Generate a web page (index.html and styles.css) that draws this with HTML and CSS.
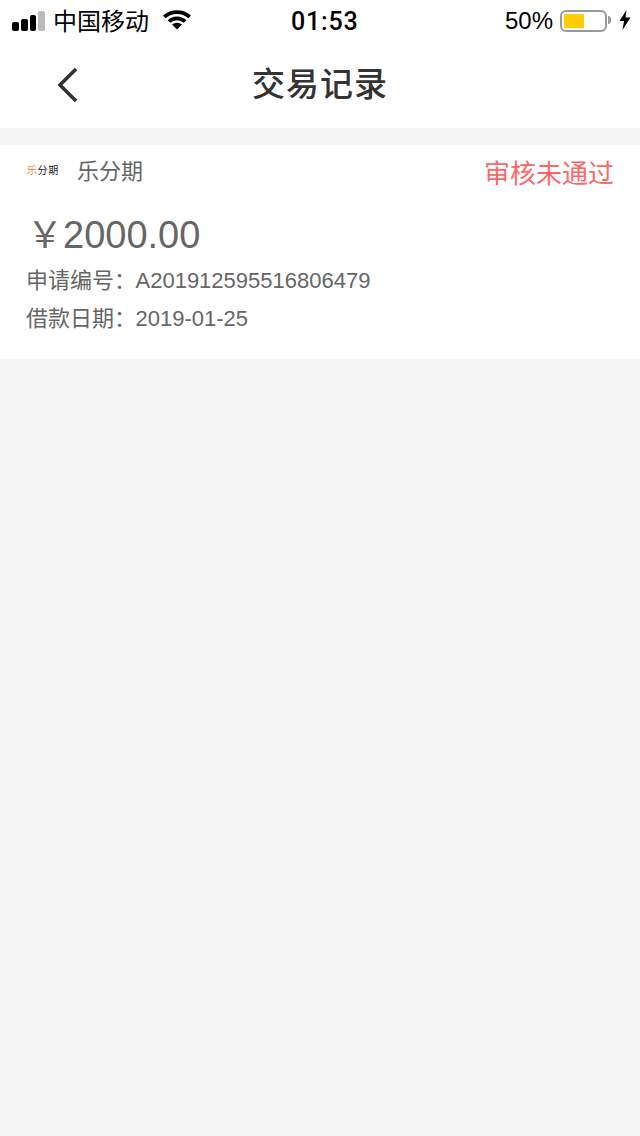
FILE: index.html

```html
<!DOCTYPE html>
<html>
<head>
  <meta charset="UTF-8">
  <title>交易记录</title>
  <link rel="stylesheet" href="styles.css">
</head>
<body>
  <div class="status-bar">
    <div class="status-left">
      <div class="signal">
        <span class="bar bar-1"></span>
        <span class="bar bar-2"></span>
        <span class="bar bar-3"></span>
        <span class="bar bar-4"></span>
      </div>
      <span class="carrier">中国移动</span>
      <svg class="wifi" width="28" height="20" viewBox="0 0 28 20">
        <path d="M14 19.5 L9 14.6 A7.4 7.4 0 0 1 19 14.6 Z" fill="#000"/>
        <path d="M4.6 10.2 A14 14 0 0 1 23.4 10.2 L20.8 12.8 A10.4 10.4 0 0 0 7.2 12.8 Z" fill="#000"/>
        <path d="M0 5.6 A21 21 0 0 1 28 5.6 L25.4 8.2 A17.4 17.4 0 0 0 2.6 8.2 Z" fill="#000"/>
      </svg>
    </div>
    <div class="clock">01:53</div>
    <div class="status-right">
      <span class="percent">50%</span>
      <div class="battery"><div class="battery-fill"></div></div>
      <div class="battery-tip"></div>
      <svg class="bolt" width="12" height="20" viewBox="0 0 12 20">
        <path d="M7.5 0 L0.5 11 L5 11 L3.5 20 L11.5 7.5 L6.5 7.5 Z" fill="#000"/>
      </svg>
    </div>
  </div>

  <div class="nav">
    <svg class="back" width="24" height="36" viewBox="0 0 24 36">
      <path d="M21 2 L5 18 L21 34" fill="none" stroke="#333" stroke-width="3.6"/>
    </svg>
    <h1 class="nav-title">交易记录</h1>
  </div>

  <div class="record">
    <div class="record-head">
      <div class="brand">
        <div class="brand-logo"><span class="logo-first">乐</span>分期</div>
        <span class="brand-name">乐分期</span>
      </div>
      <span class="record-status">审核未通过</span>
    </div>
    <div class="amount"><span class="yen">￥</span>2000.00</div>
    <div class="meta"><span class="meta-label">申请编号：</span>A201912595516806479</div>
    <div class="meta"><span class="meta-label">借款日期：</span>2019-01-25</div>
  </div>
</body>
</html>
```

FILE: styles.css

```css
body {
  font-family: "Liberation Sans", "Noto Sans CJK SC", sans-serif;
  margin: 0;
  height: 1136px;
  background-color: #f5f5f5;
  color: #666;
  overflow: hidden;
}
.status-bar {
  display: flex;
  align-items: center;
  justify-content: space-between;
  height: 40px;
  padding: 0 9px 0 12px;
  background-color: #fff;
  color: #000;
  position: relative;
}
.status-left {
  display: flex;
  align-items: center;
}
.signal {
  display: flex;
  align-items: flex-end;
  gap: 2px;
  width: 33px;
  margin-top: 1px;
}
.bar {
  width: 7px;
  border-radius: 2px;
  background-color: #000;
}
.bar-1 { height: 9px; }
.bar-2 { height: 12px; }
.bar-3 { height: 16px; }
.bar-4 { height: 20px; background-color: #bbb; }
.carrier {
  font-size: 24px;
  margin-left: 8px;
  margin-top: -2px;
}
.wifi {
  margin-left: 14px;
}
.clock {
  position: absolute;
  left: 291px;
  top: 7px;
  font-family: Roboto, sans-serif;
  font-size: 25px;
  font-weight: 500;
  letter-spacing: 0.8px;
}
.status-right {
  display: flex;
  align-items: center;
}
.percent {
  font-size: 24px;
  margin-right: 7px;
  margin-left: 1px;
  margin-top: 2px;
}
.battery {
  box-sizing: border-box;
  width: 47px;
  height: 22px;
  padding: 2px;
  border: 2px solid #999;
  border-radius: 6px;
  margin-top: 1px;
}
.battery-fill {
  width: 20px;
  height: 100%;
  background-color: #fc0;
}
.battery-tip {
  width: 3px;
  height: 8px;
  margin-left: 1px;
  background-color: #999;
  border-radius: 0 3px 3px 0;
}
.bolt {
  margin-left: 8px;
}
.nav {
  display: flex;
  align-items: center;
  justify-content: center;
  height: 88px;
  padding-bottom: 4px;
  box-sizing: border-box;
  background-color: #fff;
  position: relative;
}
.back {
  position: absolute;
  left: 55px;
  top: 27px;
}
.nav-title {
  margin: 0;
  font-size: 33px;
  font-weight: 500;
  color: #333;
  letter-spacing: 1px;
}
.record {
  margin-top: 17px;
  padding: 6px 26px 22px;
  background-color: #fff;
}
.record-head {
  display: flex;
  justify-content: space-between;
}
.brand {
  display: flex;
  align-items: center;
  height: 36px;
}
.brand-logo {
  width: 32px;
  margin-left: 1px;
  margin-right: -1px;
  font-size: 10px;
  letter-spacing: 0.6px;
  white-space: nowrap;
  color: #222;
}
.logo-first {
  color: #e8873a;
}
.brand-name {
  margin-left: 19px;
  font-size: 22px;
}
.record-status {
  margin-top: 2px;
  font-size: 26px;
  color: #ff6666;
}
.amount {
  margin-top: 21px;
  margin-bottom: 2px;
  margin-left: 1px;
  font-size: 38px;
  line-height: 48px;
}
.yen {
  font-size: 36px;
}
.meta {
  font-size: 22px;
  line-height: 37px;
  white-space: nowrap;
}
.meta + .meta {
  margin-top: 1px;
}
.meta-label {
  display: inline-block;
  width: 109.5px;
}
```
